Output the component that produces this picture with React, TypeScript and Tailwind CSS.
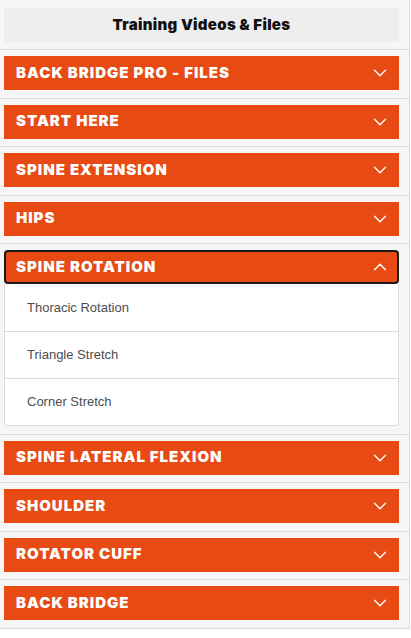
import { ChevronDown, ChevronUp } from "lucide-react";

const sections = [
    { title: "Back Bridge Pro - Files" },
    { title: "Start Here" },
    { title: "Spine Extension" },
    { title: "Hips" },
    { title: "Spine Rotation", open: true, items: ["Thoracic Rotation", "Triangle Stretch", "Corner Stretch"] },
    { title: "Spine Lateral Flexion" },
    { title: "Shoulder" },
    { title: "Rotator Cuff" },
    { title: "Back Bridge" },
];

const Section = ({ title, open, items }: { title: string; open?: boolean; items?: string[] }) => {
    return (
        <div className="pl-1 pr-[10px] pt-[6px] pb-[7.5px] border-b border-[#dcdcdc]">
            <button
                type="button"
                className={`w-full h-[34px] flex items-center justify-between bg-[#e74a12] text-white ${open ? "border-2 border-[#1b1b1b] rounded-[4px] pl-[10px] pr-[6px]" : "pl-3 pr-[8px]"}`}
            >
                <span className="font-['Inter',sans-serif] font-black text-[15px] uppercase tracking-[1px]">
                    {title}
                </span>
                {open ? <ChevronUp size={22} strokeWidth={1.5} /> : <ChevronDown size={22} strokeWidth={1.5} />}
            </button>
            {open && items && (
                <ul className="bg-white border border-t-0 border-[#dcdcdc] rounded-b-[3px]">
                    {items.map((item, i) => (
                        <li
                            key={item}
                            className={`h-[47px] flex items-center pl-[22px] font-['Liberation_Sans',Arial,sans-serif] text-[13px] text-[#4d4d4d] ${i > 0 ? "border-t border-[#dcdcdc]" : ""}`}
                        >
                            {item}
                        </li>
                    ))}
                </ul>
            )}
        </div>
    );
};

export default function App() {
    return (
        <div className="w-[410px] bg-[#f6f6f6] border-r border-[#dcdcdc]">
            <div className="pl-1 pr-[10px] pt-2 pb-[7px] border-b border-[#dcdcdc]">
                <div className="h-[34px] bg-[#eeeeee] flex items-center justify-center">
                    <span className="font-['Inter',sans-serif] font-black text-[15px] text-[#111] tracking-[0.3px]">
                        Training Videos &amp; Files
                    </span>
                </div>
            </div>
            {sections.map((s) => (
                <Section key={s.title} title={s.title} open={s.open} items={s.items} />
            ))}
        </div>
    );
}
